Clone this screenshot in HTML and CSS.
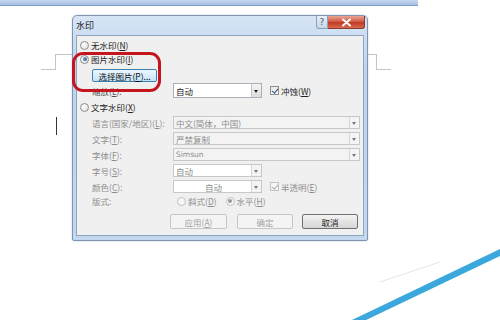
FILE: index.html
```html
<!DOCTYPE html>
<html lang="zh-CN">
<head>
    <meta charset="UTF-8">
    <meta name="viewport" content="width=device-width, initial-scale=1.0">
    <title>水印</title>
    <link rel="stylesheet" href="styles.css">
</head>
<body>

    <div class="ribbon"></div>

    <!-- page corner marks of the document behind the dialog -->
    <div class="mark mark-left"></div>
    <div class="mark mark-right"></div>
    <div class="ibeam"></div>

    <div class="dialog">
        <div class="titlebar">
            <span class="title">水印</span>
            <div class="caption-btns">
                <div class="help">?</div>
                <div class="close">
                    <svg width="11" height="9" viewBox="0 0 11 9">
                        <path d="M2 1.5 L9 7.5 M9 1.5 L2 7.5" stroke="#fff" stroke-width="2" stroke-linecap="round"/>
                    </svg>
                </div>
            </div>
        </div>

        <div class="client">
            <div class="option first"><span class="radio"></span>无水印(<u>N</u>)</div>
            <div class="option gap2"><span class="radio on"></span>图片水印(<u>I</u>)</div>
            <div class="pick-row"><div class="btn pick">选择图片(<u>P</u>)...</div></div>
            <div class="field scale-row">
                <span class="lbl">缩放(<u>L</u>):</span>
                <div class="select short"><span class="val">自动</span><span class="arrow"></span></div>
                <div class="check"><span class="box on"></span>冲蚀(<u>W</u>)</div>
            </div>
            <div class="option gap3"><span class="radio"></span>文字水印(<u>X</u>)</div>

            <div class="field off">
                <span class="lbl">语言(国家/地区)(<u>L</u>):</span>
                <div class="select full"><span class="val">中文(简体，中国)</span><span class="arrow"></span></div>
            </div>
            <div class="field off">
                <span class="lbl">文字(<u>T</u>):</span>
                <div class="select full"><span class="val">严禁复制</span><span class="arrow"></span></div>
            </div>
            <div class="field off">
                <span class="lbl">字体(<u>F</u>):</span>
                <div class="select full"><span class="val latin">Simsun</span><span class="arrow"></span></div>
            </div>
            <div class="field off">
                <span class="lbl">字号(<u>S</u>):</span>
                <div class="select short white"><span class="val">自动</span><span class="arrow"></span></div>
            </div>
            <div class="field off">
                <span class="lbl">颜色(<u>C</u>):</span>
                <div class="select short white"><span class="val center">自动</span><span class="arrow"></span></div>
                <div class="check"><span class="box on"></span>半透明(<u>E</u>)</div>
            </div>
            <div class="field off layout-row">
                <span class="lbl">版式:</span>
                <div class="option inline"><span class="radio"></span>斜式(<u>D</u>)</div>
                <div class="option inline second"><span class="radio on"></span>水平(<u>H</u>)</div>
            </div>

            <div class="actions">
                <div class="btn disabled apply">应用(<u>A</u>)</div>
                <div class="btn disabled ok">确定</div>
                <div class="btn cancel">取消</div>
            </div>
        </div>
    </div>

    <div class="highlight"></div>

    <svg class="stripe" width="500" height="320" viewBox="0 0 500 320">
        <polygon points="352,320 366,320 500,256 500,249" fill="#3aa8dc"/>
        <polyline points="380,282 440,262" stroke="#e6e6e6" stroke-width="1" fill="none"/>
    </svg>

</body>
</html>
```

FILE: styles.css
```css
* {
    box-sizing: border-box;
}
body {
    margin: 0;
    width: 500px;
    height: 320px;
    overflow: hidden;
    position: relative;
    background: #fff;
    font-family: "Noto Sans CJK SC", "DejaVu Sans", sans-serif;
    font-size: 8.5px;
    color: #222;
}
u {
    text-decoration: underline;
    text-underline-offset: 1px;
}
.ribbon {
    width: 418px;
    height: 6px;
    background: linear-gradient(#c4d8f0, #a6c0e3);
    border-bottom: 1px solid #7c9bc4;
}

/* document corner marks */
.mark {
    position: absolute;
    width: 15px;
    height: 15px;
    top: 55px;
    border-color: #c4c4c4;
    border-style: solid;
}
.mark-left {
    left: 41px;
    border-width: 0 1px 1px 0;
}
.mark-left::after {
    content: "";
    position: absolute;
    left: 14px;
    top: -1px;
    width: 20px;
    border-top: 1px solid #c4c4c4;
}
.mark-right {
    left: 376px;
    border-width: 0 0 1px 1px;
}
.mark-right::after {
    content: "";
    position: absolute;
    left: -10px;
    top: -1px;
    width: 10px;
    border-top: 1px solid #c4c4c4;
}
.ibeam {
    position: absolute;
    left: 56px;
    top: 117px;
    width: 1px;
    height: 18px;
    background: #333;
}

/* dialog frame */
.dialog {
    position: relative;
    width: 296px;
    height: 226px;
    margin: 9px 0 0 72px;
    border: 1px solid #7f94ae;
    border-radius: 5px 5px 2px 2px;
    background: linear-gradient(#d6e5f6, #bcd3ed 25%, #c3d8ef);
    display: flex;
    flex-direction: column;
    box-shadow: 0 0 2px rgba(90, 110, 140, 0.35);
}
.titlebar {
    height: 19px;
    display: flex;
    align-items: flex-start;
    padding: 0 2px 0 3px;
}
.title {
    line-height: 19px;
    font-size: 9px;
    color: #1c1c1c;
}
.caption-btns {
    margin-left: auto;
    display: flex;
}
.help {
    width: 12px;
    height: 13px;
    border: 1px solid #8ba0bb;
    border-top: none;
    border-radius: 0 0 0 3px;
    background: linear-gradient(#e8eff8, #c6d6ea);
    font-family: "DejaVu Sans", sans-serif;
    font-size: 9px;
    line-height: 12px;
    text-align: center;
    color: #4a5a70;
}
.close {
    width: 37px;
    height: 13px;
    border: 1px solid #8b3b2f;
    border-top: none;
    border-left: none;
    border-radius: 0 0 3px 0;
    background: linear-gradient(#e9a696, #d25c45 45%, #c23a23 55%, #d8694e);
    display: flex;
    align-items: center;
    justify-content: center;
}
.client {
    flex: 1;
    margin: 0 3px 4px 3px;
    background: #f0f0f0;
    border: 1px solid #8fa4be;
    padding: 3px 3px 6px 3px;
    display: flex;
    flex-direction: column;
}

/* rows */
.option {
    height: 12px;
    display: flex;
    align-items: center;
    white-space: nowrap;
}
.option.gap2 {
    margin-top: 2px;
}
.option.gap3 {
    margin-top: 3px;
}
.radio {
    width: 9px;
    height: 9px;
    border-radius: 50%;
    border: 1px solid #8e8f8f;
    background: radial-gradient(circle at 40% 35%, #fff, #dcdcdc);
    margin-right: 2px;
    flex: none;
    position: relative;
}
.radio.on::after {
    content: "";
    position: absolute;
    left: 1.5px;
    top: 1.5px;
    width: 4px;
    height: 4px;
    border-radius: 50%;
    background: radial-gradient(circle at 40% 35%, #6f9fd8, #1c3f78);
}
.pick-row {
    margin-top: 4px;
    padding-left: 12px;
    height: 13px;
}
.btn {
    height: 100%;
    display: flex;
    align-items: center;
    justify-content: center;
    border: 1px solid #707070;
    border-radius: 2px;
    background: linear-gradient(#f4f4f4, #e4e4e4 50%, #d6d6d6);
    white-space: nowrap;
}
.pick {
    width: 65px;
    border-color: #3c7fb1;
    background: linear-gradient(#edf6fd, #d9edfc 50%, #bfe2f9);
    color: #111;
}
.field {
    height: 13px;
    margin-top: 3px;
    padding-left: 12px;
    display: flex;
    align-items: center;
    white-space: nowrap;
}
.scale-row {
    height: 15px;
    margin-top: 1px;
}
.lbl {
    width: 81px;
    flex: none;
}
.scale-row .lbl {
    color: #555;
}
.field.off .lbl,
.field.off .check,
.field.off .option {
    color: #8d8d8d;
}
.select {
    height: 100%;
    display: flex;
    align-items: center;
    border: 1px solid #a9b0b8;
    background: #fff;
    flex: none;
}
.select.full {
    width: 187px;
}
.select.short {
    width: 89px;
}
.val {
    flex: 1;
    padding-left: 2px;
    overflow: hidden;
}
.val.center {
    text-align: center;
}
.val.latin {
    font-family: "DejaVu Sans", sans-serif;
    font-size: 7.5px;
}
.arrow {
    width: 10px;
    height: 100%;
    border-left: 1px solid #c2c6cb;
    background: linear-gradient(#f4f4f4, #dedede);
    position: relative;
}
.arrow::after {
    content: "";
    position: absolute;
    left: 2px;
    top: 50%;
    margin-top: -1px;
    border-left: 2.5px solid transparent;
    border-right: 2.5px solid transparent;
    border-top: 3px solid #222;
}
.field.off .select {
    border-color: #c8c8c8;
    background: #f3f3f3;
    color: #8d8d8d;
}
.field.off .select.white {
    background: #fff;
}
.field.off .arrow {
    background: #f4f4f4;
    border-left-color: #d6d6d6;
}
.field.off .arrow::after {
    border-top-color: #777;
}
.check {
    margin-left: 8px;
    display: flex;
    align-items: center;
}
.box {
    width: 9px;
    height: 9px;
    border: 1px solid #8f8f8f;
    background: linear-gradient(#e8e8e8, #fff);
    margin-right: 2px;
    position: relative;
}
.box.on::after {
    content: "";
    position: absolute;
    left: 2px;
    top: 0;
    width: 2.5px;
    height: 5px;
    border-right: 1.5px solid #2f4c7a;
    border-bottom: 1.5px solid #2f4c7a;
    transform: rotate(40deg);
}
.field.off .box {
    border-color: #c2c2c2;
    background: #f6f6f6;
}
.field.off .box.on::after {
    border-color: #b0b0b0;
}
.layout-row {
    height: 12px;
    margin-top: 2px;
}
.option.inline {
    margin-left: 4px;
}
.option.second {
    margin-left: 9px;
}
.field.off .radio {
    border-color: #c0c0c0;
    background: #f6f6f6;
}
.field.off .radio.on::after {
    background: #9a9a9a;
}

.actions {
    margin-top: 7px;
    height: 15px;
    display: flex;
    justify-content: flex-end;
    padding-right: 2px;
}
.actions .btn {
    width: 56px;
    margin-left: 9px;
}
.actions .apply {
    width: 57px;
}
.actions .ok {
    margin-left: 10px;
}
.btn.disabled {
    border-color: #c6c6c6;
    background: #f4f4f4;
    color: #a3a3a3;
}

/* red annotation drawn over the dialog */
.highlight {
    position: absolute;
    left: 72px;
    top: 52px;
    width: 89px;
    height: 40px;
    border: 3px solid #c5161f;
    border-radius: 11px;
}
.stripe {
    position: absolute;
    left: 0;
    top: 0;
}
```
